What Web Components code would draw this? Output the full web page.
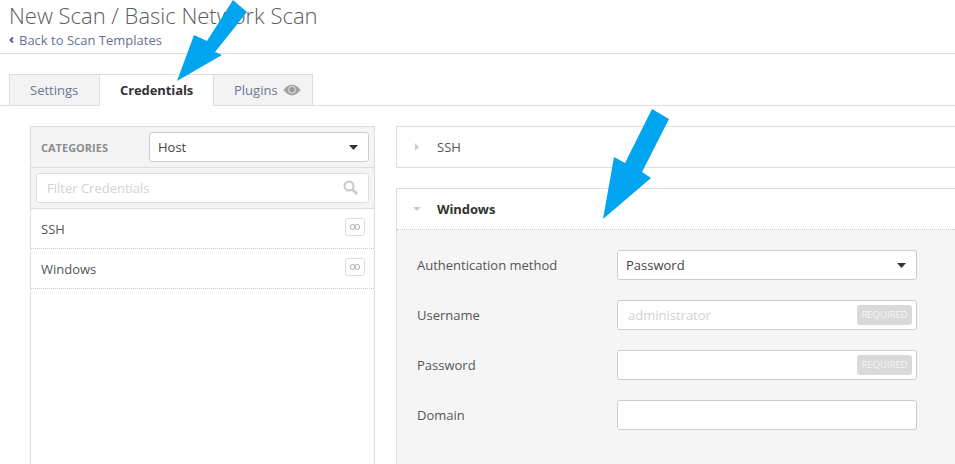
<!DOCTYPE html>
<html>
<head>
<meta charset="utf-8">
<title>New Scan</title>
<style>
  html, body { margin: 0; height: 464px; overflow: hidden; background: #fff; }
  body { font-family: "Open Sans", "Liberation Sans", sans-serif; color: #444; position: relative; }
</style>
</head>
<body>
<scan-header title-text="New Scan / Basic Network Scan" back="Back to Scan Templates"></scan-header>
<scan-tabs></scan-tabs>
<scan-body>
  <cred-sidebar slot="side"></cred-sidebar>
  <cred-section slot="main" label="SSH"></cred-section>
  <cred-section slot="main" label="Windows" open>
    <form-row label="Authentication method"><select-box value="Password"></select-box></form-row>
    <form-row label="Username"><text-box placeholder="administrator" required></text-box></form-row>
    <form-row label="Password"><text-box required></text-box></form-row>
    <form-row label="Domain"><text-box></text-box></form-row>
  </cred-section>
</scan-body>
<call-arrow points="233,0 247,12 215,52 222,55 177,81 194,35 207,41"></call-arrow>
<call-arrow points="652,109 669,119 642,172 651,178 603,219 614,157 625,163"></call-arrow>

<script>
class ScanHeader extends HTMLElement {
  connectedCallback() {
    this.attachShadow({ mode: 'open' });
    this.shadowRoot.innerHTML = `
      <style>
        :host { display: block; height: 53px; border-bottom: 1px solid #ddd; padding-left: 9px; }
        h1 { margin: 0; font-size: 22px; font-weight: 300; line-height: 30px; color: #5c5c5c; }
        a { display: flex; align-items: center; gap: 5px; margin-top: 1px; font-size: 13px; line-height: 18px; color: #667095; }
        svg { width: 5px; height: 8px; }
      </style>
      <h1>${this.getAttribute('title-text')}</h1>
      <a><svg viewBox="0 0 5 8"><path d="M4 1.500 1.500 4 4 6.500" fill="none" stroke="#555f85" stroke-width="1.800"/></svg>${this.getAttribute('back')}</a>
    `;
  }
}

class ScanTabs extends HTMLElement {
  connectedCallback() {
    this.attachShadow({ mode: 'open' });
    this.shadowRoot.innerHTML = `
      <style>
        :host { display: flex; height: 31px; margin-top: 20px; padding-left: 9px; border-bottom: 1px solid #ddd; font-size: 13px; }
        div { display: flex; align-items: center; box-sizing: border-box; height: 32px; border: 1px solid #ddd; border-right: 0; background: #f3f3f3; color: #6d7599; }
        .s { width: 90px; padding-left: 20px; }
        .c { width: 114px; padding-left: 20px; background: #fff; font-weight: 700; color: #333; border-bottom-color: #fff; letter-spacing: -0.1px; }
        .p { width: 100px; padding-left: 20px; gap: 5px; border-right: 1px solid #ddd; }
        svg { width: 18px; height: 12px; }
      </style>
      <div class="s">Settings</div>
      <div class="c">Credentials</div>
      <div class="p">Plugins
        <svg viewBox="0 0 18 12"><path d="M.5 6C3 2.500 5.800.8 9 .8s6 1.700 8.500 5.200C15 9.500 12.200 11.200 9 11.200S3 9.500.5 6Z" fill="#a3a3a3"/><circle cx="9" cy="5.800" r="3.800" fill="#dcdcdc"/><circle cx="9" cy="5.800" r="2.700" fill="#9a9a9a"/></svg>
      </div>
    `;
  }
}

class ScanBody extends HTMLElement {
  connectedCallback() {
    this.attachShadow({ mode: 'open' });
    this.shadowRoot.innerHTML = `
      <style>
        :host { display: flex; gap: 21px; padding: 20px 0 0 30px; }
        .side { flex: 0 0 345px; }
        .main { flex: 0 0 580px; display: flex; flex-direction: column; gap: 20px; }
      </style>
      <div class="side"><slot name="side"></slot></div>
      <div class="main"><slot name="main"></slot></div>
    `;
  }
}

class CredSidebar extends HTMLElement {
  connectedCallback() {
    this.attachShadow({ mode: 'open' });
    const inf = `<svg class="inf" viewBox="0 0 20 18"><rect x=".5" y=".5" width="19" height="17" rx="2" fill="#fff" stroke="#ddd"/><circle cx="7.800" cy="9" r="2.500" fill="none" stroke="#b0b0b0"/><circle cx="12.200" cy="9" r="2.500" fill="none" stroke="#b0b0b0"/></svg>`;
    this.shadowRoot.innerHTML = `
      <style>
        :host { display: block; box-sizing: border-box; height: 338px; border: 1px solid #ddd; border-bottom: 0; font-size: 13px; }
        .top { display: flex; align-items: center; justify-content: space-between; height: 40px; padding: 0 5px 0 10px; background: #f4f4f4; border-bottom: 1px solid #ddd; }
        .cat { font-size: 11px; font-weight: 700; color: #8c8c8c; }
        select-box { width: 220px; }
        .filter { height: 41px; box-sizing: border-box; padding: 5px; background: #f4f4f4; border-bottom: 1px solid #ddd; }
        .input { display: flex; align-items: center; justify-content: space-between; box-sizing: border-box; height: 30px; padding: 0 10px; background: #fff; border: 1px solid #ddd; border-radius: 3px; color: #d2d2d2; }
        .input svg { width: 15px; height: 15px; margin-top: -2px; }
        .row { display: flex; align-items: center; justify-content: space-between; height: 40px; box-sizing: border-box; padding: 0 9px 0 10px; border-bottom: 1px dotted #ccc; color: #555; }
        .inf { width: 20px; height: 18px; margin-top: -3px; }
      </style>
      <div class="top"><span class="cat">CATEGORIES</span><select-box value="Host"></select-box></div>
      <div class="filter"><div class="input">Filter Credentials
        <svg viewBox="0 0 15 15"><circle cx="6" cy="6" r="4.500" fill="none" stroke="#c8c8c8" stroke-width="2"/><path d="M9.500 9.500 14 14" stroke="#c8c8c8" stroke-width="2.500"/></svg>
      </div></div>
      <div class="row">SSH${inf}</div>
      <div class="row">Windows${inf}</div>
    `;
  }
}

class CredSection extends HTMLElement {
  connectedCallback() {
    this.attachShadow({ mode: 'open' });
    const open = this.hasAttribute('open');
    const arrow = open ? 'M0 2h8L4 6Z' : 'M2 0v8l4-4Z';
    this.shadowRoot.innerHTML = `
      <style>
        :host { display: block; box-sizing: border-box; border: 1px solid #ddd; font-size: 13px; }
        :host([open]) { border-bottom: 0; }
        .head { display: flex; align-items: center; gap: 16px; height: 40px; padding-left: 16px; color: #555; }
        .head svg { width: 8px; height: 8px; }
        :host([open]) .head { color: #333; font-weight: 700; border-bottom: 1px dotted #ccc; letter-spacing: -0.1px; }
        .body { background: #f5f5f5; padding: 20px 20px 0; display: flex; flex-direction: column; gap: 20px; height: 214px; }
      </style>
      <div class="head"><svg viewBox="0 0 8 8"><path d="${arrow}" fill="#ccc"/></svg>${this.getAttribute('label')}</div>
      ${open ? '<div class="body"><slot></slot></div>' : ''}
    `;
  }
}

class FormRow extends HTMLElement {
  connectedCallback() {
    this.attachShadow({ mode: 'open' });
    this.shadowRoot.innerHTML = `
      <style>
        :host { display: flex; align-items: center; font-size: 13px; color: #555; }
        span { flex: 0 0 200px; }
        ::slotted(*) { width: 300px; }
      </style>
      <span>${this.getAttribute('label')}</span><slot></slot>
    `;
  }
}

class SelectBox extends HTMLElement {
  connectedCallback() {
    this.attachShadow({ mode: 'open' });
    this.shadowRoot.innerHTML = `
      <style>
        :host { display: flex; align-items: center; justify-content: space-between; box-sizing: border-box; height: 30px; padding: 0 10px 0 8px; background: #fff; border: 1px solid #ccc; border-radius: 3px; font-size: 13px; color: #444; }
        svg { width: 9px; height: 5px; }
      </style>
      ${this.getAttribute('value')}<svg viewBox="0 0 9 5"><path d="M0 0h9L4.500 5Z" fill="#333"/></svg>
    `;
  }
}

class TextBox extends HTMLElement {
  connectedCallback() {
    this.attachShadow({ mode: 'open' });
    const req = this.hasAttribute('required') ? '<b>REQUIRED</b>' : '';
    this.shadowRoot.innerHTML = `
      <style>
        :host { display: flex; align-items: center; justify-content: space-between; box-sizing: border-box; height: 30px; padding: 0 4px 0 10px; background: #fff; border: 1px solid #ccc; border-radius: 3px; font-size: 13px; color: #d2d2d2; }
        b { box-sizing: border-box; width: 55px; text-align: center; background: #d9d9d9; color: #f6f6f6; border-radius: 3px; font-size: 9.500px; font-weight: 400; line-height: 20px; }
      </style>
      <span>${this.getAttribute('placeholder') || ''}</span>${req}
    `;
  }
}

class CallArrow extends HTMLElement {
  connectedCallback() {
    this.attachShadow({ mode: 'open' });
    this.shadowRoot.innerHTML = `
      <style>
        :host { position: absolute; left: 0; top: 0; }
        svg { display: block; }
      </style>
      <svg width="955" height="464"><polygon points="${this.getAttribute('points')}" fill="#00a4ef"/></svg>
    `;
  }
}

customElements.define('scan-header', ScanHeader);
customElements.define('scan-tabs', ScanTabs);
customElements.define('scan-body', ScanBody);
customElements.define('cred-sidebar', CredSidebar);
customElements.define('cred-section', CredSection);
customElements.define('form-row', FormRow);
customElements.define('select-box', SelectBox);
customElements.define('text-box', TextBox);
customElements.define('call-arrow', CallArrow);
</script>
</body>
</html>
